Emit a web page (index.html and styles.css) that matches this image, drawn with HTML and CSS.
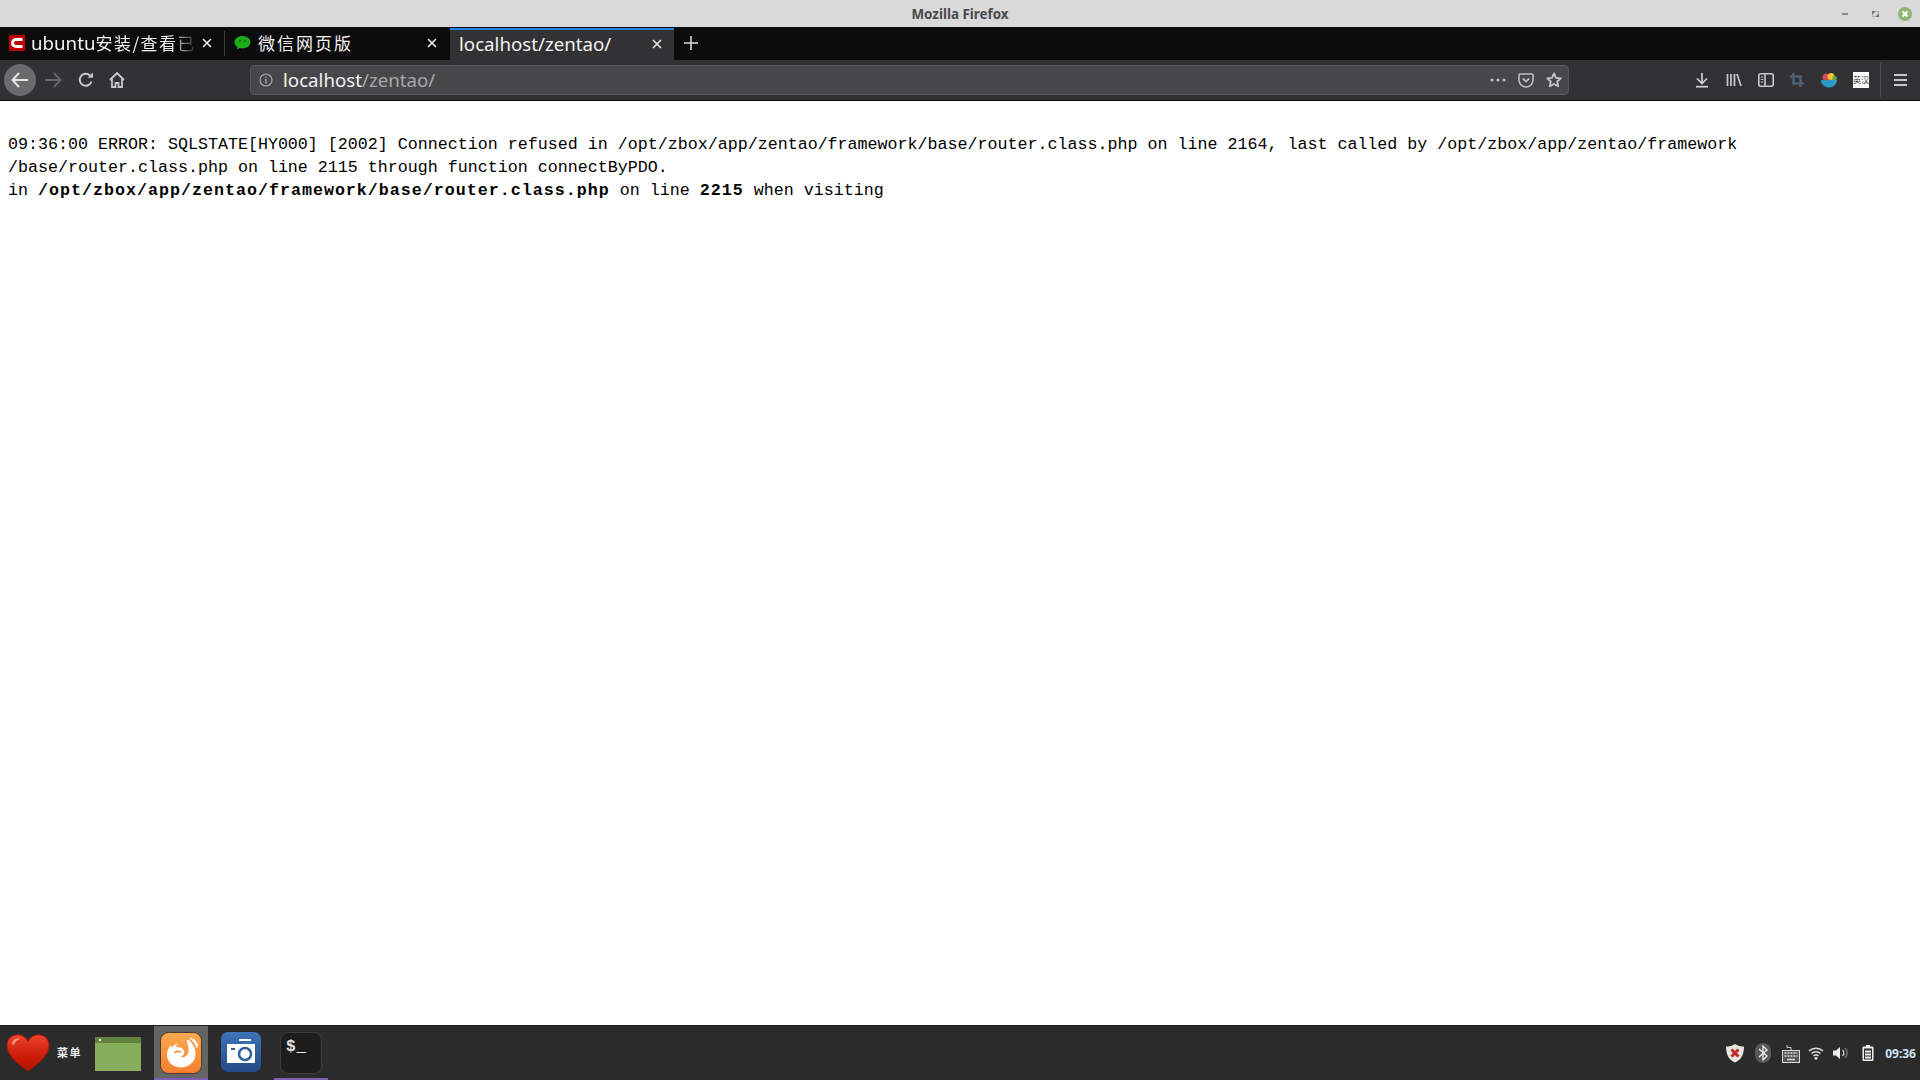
FILE: index.html
```html
<!DOCTYPE html>
<html lang="zh">
<head>
<meta charset="utf-8">
<title>Mozilla Firefox</title>
<link rel="stylesheet" href="styles.css">
</head>
<body>
<div class="window">
  <header class="titlebar">
    <div></div>
    <div class="title">Mozilla Firefox</div>
    <div class="winctl">
      <svg class="wc" width="30" height="14" viewBox="0 0 30 14"><rect x="12" y="6" width="6" height="2" fill="#8a8a8a"/></svg>
      <svg class="wc" width="30" height="14" viewBox="0 0 30 14"><path d="M12 4h4l-4 4zM19 10h-4l4-4z" fill="#777"/><path d="M16 4h3v3zM15 10h-3V7z" fill="#aaa"/></svg>
      <svg class="wc" width="30" height="16" viewBox="0 0 30 16"><circle cx="15" cy="8" r="7" fill="#8fb573"/><path d="M12.500 5.500l5 5M17.500 5.500l-5 5" stroke="#fff" stroke-width="2"/></svg>
    </div>
  </header>

  <div class="tabbar">
    <div class="tab tab-first">
      <svg class="favicon" width="16" height="16" viewBox="0 0 16 16"><rect width="16" height="16" fill="#c00000"/><path d="M13.500 4.500H7a3.500 3.500 0 0 0 0 7h6.500" fill="none" stroke="#fff" stroke-width="3"/></svg>
      <span class="tab-label tab-fade">ubuntu<span class="cjk">安装/查看已</span></span>
      <svg class="tab-x" width="10" height="10" viewBox="0 0 10 10"><path d="M1 1l8 8M9 1l-8 8" stroke="#f0f0f0" stroke-width="1.600"/></svg>
    </div>
    <div class="tab tab-second">
      <svg class="favicon" width="17" height="16" viewBox="0 0 17 16"><path d="M8.500 1C4 1 .5 3.700.5 7.200c0 2 1.100 3.700 3 4.800l-.7 2.600 3-1.600c.9.200 1.700.3 2.700.3 4.500 0 8-2.800 8-6.100S13 1 8.500 1z" fill="#1aad19"/><circle cx="6" cy="5.800" r="1" fill="#0c5c0c"/><circle cx="11" cy="5.800" r="1" fill="#0c5c0c"/></svg>
      <span class="tab-label cjk wide">微信网页版</span>
      <svg class="tab-x" width="10" height="10" viewBox="0 0 10 10"><path d="M1 1l8 8M9 1l-8 8" stroke="#f0f0f0" stroke-width="1.600"/></svg>
    </div>
    <div class="tab tab-active">
      <span class="tab-label">localhost/zentao/</span>
      <svg class="tab-x" width="10" height="10" viewBox="0 0 10 10"><path d="M1 1l8 8M9 1l-8 8" stroke="#e8e8e8" stroke-width="1.600"/></svg>
    </div>
    <svg class="newtab" width="14" height="14" viewBox="0 0 14 14"><path d="M7 0v14M0 7h14" stroke="#d8d8d8" stroke-width="1.600"/></svg>
  </div>

  <nav class="navbar">
    <div class="backbtn">
      <svg width="18" height="16" viewBox="0 0 18 16"><path d="M8 1L1.500 8 8 15M2 8h15" fill="none" stroke="#e6e6e6" stroke-width="2"/></svg>
    </div>
    <svg class="navicon nav-fwd" width="18" height="16" viewBox="0 0 18 16"><path d="M10 1l6.500 7-6.500 7M16 8H1" fill="none" stroke="#66666a" stroke-width="2"/></svg>
    <svg class="navicon" width="16" height="16" viewBox="0 0 16 16"><path d="M13.500 9.500A6 6 0 1 1 12 3.500" fill="none" stroke="#c8c8ca" stroke-width="2"/><path d="M9.500 5.800h5.500V.5z" fill="#c8c8ca"/></svg>
    <svg class="navicon nav-home" width="16" height="16" viewBox="0 0 16 16"><path d="M1 8l7-7 7 7M3 7v8h3.500v-4h3v4H13V7" fill="none" stroke="#c8c8ca" stroke-width="1.800"/></svg>

    <div class="urlbar">
      <svg class="info" width="14" height="14" viewBox="0 0 14 14"><circle cx="7" cy="7" r="6" fill="none" stroke="#a8a8aa" stroke-width="1.200"/><path d="M7 6v4.500M7 3.500v1.300" stroke="#a8a8aa" stroke-width="1.400"/></svg>
      <span class="url"><span class="url-host">localhost</span>/zentao/</span>
      <svg class="url-ic" width="16" height="4" viewBox="0 0 16 4"><circle cx="2" cy="2" r="1.600" fill="#bdbdbf"/><circle cx="8" cy="2" r="1.600" fill="#bdbdbf"/><circle cx="14" cy="2" r="1.600" fill="#bdbdbf"/></svg>
      <svg class="url-ic" width="16" height="15" viewBox="0 0 16 15"><path d="M1 2.200q0-1.200 1.200-1.200h11.600q1.200 0 1.200 1.200V7a7 7 0 0 1-14 0z" fill="none" stroke="#bdbdbf" stroke-width="1.600"/><path d="M4.800 5.500L8 8.500l3.200-3" fill="none" stroke="#bdbdbf" stroke-width="1.800"/></svg>
      <svg class="url-ic" width="16" height="16" viewBox="0 0 16 16"><path d="M8 1.300l2 4.500 4.800.5-3.600 3.200 1 4.800L8 11.900l-4.200 2.400 1-4.800L1.200 6.300 6 5.800z" fill="none" stroke="#c8c8ca" stroke-width="1.700" stroke-linejoin="round"/></svg>
    </div>

    <div class="tools">
      <svg width="16" height="16" viewBox="0 0 16 16"><path d="M8 1v10M3 6.500L8 11.500l5-5" fill="none" stroke="#d0d0d2" stroke-width="1.700"/><path d="M2 14.700h12" stroke="#d0d0d2" stroke-width="1.700"/></svg>
      <svg width="16" height="16" viewBox="0 0 16 16"><path d="M1.500 2v12M5 2v12M8.500 2v12M11 2l4 12" stroke="#c8c8ca" stroke-width="1.700" fill="none"/></svg>
      <svg width="16" height="14" viewBox="0 0 16 14"><rect x=".8" y=".8" width="14.400" height="12.400" rx="2" fill="none" stroke="#c8c8ca" stroke-width="1.600"/><path d="M7 1v12" stroke="#c8c8ca" stroke-width="1.600"/><path d="M2.800 4h2.500M2.800 6.500h2.500M2.800 9h2.500" stroke="#c8c8ca" stroke-width="1"/></svg>
      <svg width="14" height="14" viewBox="0 0 14 14"><path d="M3.500 0v10.500H14M0 3.500h10.500V14" fill="none" stroke="#4c6072" stroke-width="2.600"/></svg>
      <svg class="t-bowl" width="16" height="16" viewBox="0 0 16 16"><path d="M0 8h16a8 7.500 0 0 1-16 0z" fill="#2b9bc9"/><circle cx="5" cy="5" r="3.500" fill="#d64a5a"/><circle cx="10" cy="4.500" r="3.500" fill="#f1c232"/><circle cx="13.500" cy="6" r="2.300" fill="#5fae4f"/></svg>
      <div class="dict">英汉</div>
      <div class="sep"></div>
      <svg class="menu" width="13" height="12" viewBox="0 0 13 12"><path d="M0 1h13M0 6h13M0 11h13" stroke="#c8c8ca" stroke-width="1.800"/></svg>
    </div>
  </nav>

  <main class="content">
    <p class="err">09:36:00 ERROR: SQLSTATE[HY000] [2002] Connection refused in /opt/zbox/app/zentao/framework/base/router.class.php on line 2164, last called by /opt/zbox/app/zentao/framework<br>/base/router.class.php on line 2115 through function connectByPDO.<br>in <strong>/opt/zbox/app/zentao/framework/base/router.class.php</strong> on line <strong>2215</strong> when visiting</p>
  </main>

  <footer class="panel">
    <svg class="heart" width="44" height="40" viewBox="0 0 46 40">
      <defs>
        <linearGradient id="hg" x1="0" y1="0" x2="0" y2="1"><stop offset="0" stop-color="#f0442c"/><stop offset=".6" stop-color="#c91b06"/><stop offset="1" stop-color="#b01405"/></linearGradient>
      </defs>
      <path d="M23 39C12 31 1 23 1 12 1 5 6 1 12 1c5 0 9 2.500 11 7 2-4.500 6-7 11-7 6 0 11 4 11 11 0 11-11 19-22 27z" fill="url(#hg)" stroke="#a01208"/>
      <path d="M6 10c1-4 5-6 9-5-3 1-6 3-7 7z" fill="#f89a80"/>
    </svg>
    <span class="menu-label">菜单</span>
    <svg class="files" width="46" height="34" viewBox="0 0 46 34"><rect width="46" height="34" fill="#88ad5a"/><rect width="46" height="6" fill="#63823f"/><rect x="4" y="2" width="2" height="2" fill="#e8f0d8"/></svg>
    <div class="task task-hover">
      <svg width="42" height="42" viewBox="0 0 42 42">
        <defs><linearGradient id="fg" x1="0" y1="0" x2="0" y2="1"><stop offset="0" stop-color="#fda94f"/><stop offset="1" stop-color="#f47f2e"/></linearGradient></defs>
        <rect x=".5" y=".5" width="41" height="41" rx="8" fill="url(#fg)" stroke="#4a3a30"/>
        <path d="M29 8c4 4 7 9 6.500 15-.7 7.500-7 12.500-14.500 12.500S7 30 7 23c0-4 1.500-7.500 4-10l.5 3c1.500-2.500 4-4 7-4.500-1.300 1-2.500 2-3 3.500 3-.5 7 .5 8.500 3.500 1.200 3-1 6-4 6.500 3.500 1.300 7.500-1 8.500-5 .8-4-1-8-2-11.500z" fill="#fff"/>
        <path d="M14 21c2-2 5-2 7-1" fill="none" stroke="#f58a35" stroke-width="1.500"/>
        <path d="M30 6c3 2 6 6 7 10M33 7c2 2 4 4 5 7" fill="none" stroke="#fff" stroke-width="1.300"/>
      </svg>
    </div>
    <div class="task">
      <svg width="40" height="40" viewBox="0 0 40 40">
        <defs><linearGradient id="cg" x1="0" y1="0" x2="0" y2="1"><stop offset="0" stop-color="#3d74b8"/><stop offset="1" stop-color="#244a85"/></linearGradient></defs>
        <rect width="40" height="40" rx="7" fill="url(#cg)"/>
        <rect x="18" y="7" width="12" height="2" fill="#fff"/>
        <rect x="6" y="12" width="28" height="19" fill="#fff"/>
        <circle cx="24" cy="22" r="6" fill="#fff" stroke="#2f5f9f" stroke-width="2.500"/>
        <rect x="10" y="16" width="4" height="2" fill="#2f5f9f"/>
      </svg>
    </div>
    <div class="task task-open">
      <div class="term">$_</div>
    </div>
    <div class="tray">
      <svg class="t-shield" width="20" height="20" viewBox="0 0 20 20"><path d="M10 1c3 2 6 2.500 9 2.500 0 7-2 13-9 16C3 16.500 1 10.500 1 3.500 4 3.500 7 3 10 1z" fill="#e8e6e0"/><path d="M6.500 6.500l7 7M13.500 6.500l-7 7" stroke="#c0282c" stroke-width="3"/></svg>
      <svg class="t-bt" width="16" height="20" viewBox="0 0 16 20"><rect width="16" height="20" rx="8" fill="#58585a"/><path d="M4 6l8 7-4 4V3l4 4-8 7" fill="none" stroke="#eee" stroke-width="1.300"/></svg>
      <svg class="t-kb" width="18" height="19" viewBox="0 0 18 19"><path d="M9 6V3.500H5V1" fill="none" stroke="#ccc"/><rect x=".5" y="6.500" width="17" height="12" fill="#555" stroke="#ddd"/><path d="M2.500 9h13M2.500 12h13" stroke="#ddd" stroke-width="1.500" stroke-dasharray="2 1"/><path d="M5 15.500h8" stroke="#ddd" stroke-width="1.500"/></svg>
      <svg class="t-wifi" width="16" height="14" viewBox="0 0 16 14"><path d="M1 5a10 10 0 0 1 14 0M3.500 7.500a6.500 6.500 0 0 1 9 0M5.500 10a3.500 3.500 0 0 1 5 0" fill="none" stroke="#ddd" stroke-width="1.500"/><path d="M8 11l-2 1 2 2 2-2z" fill="#eee"/></svg>
      <svg class="t-vol" width="16" height="14" viewBox="0 0 16 14"><path d="M0 4.500h3L7 1v12L3 9.500H0z" fill="#eee"/><path d="M9.500 4a4 4 0 0 1 0 6" fill="none" stroke="#ccc" stroke-width="1.400"/><path d="M12 2a7 7 0 0 1 0 10" fill="none" stroke="#777" stroke-width="1.400"/></svg>
      <svg class="t-bat" width="12" height="16" viewBox="0 0 12 16"><path d="M4 0h4v1.500h2.500q1 0 1 1V15q0 1-1 1h-9q-1 0-1-1V2.500q0-1 1-1H4z" fill="#eee"/><rect x="2" y="3.500" width="8" height="11" fill="#2b2b2b"/><path d="M3 5.500h6v2H3zM3 8.500h6v2H3zM3 11.500h6v2H3z" fill="#eee"/></svg>
      <span class="clock">09:36</span>
    </div>
  </footer>
</div>
</body>
</html>
```

FILE: styles.css
```css
html, body { margin: 0; height: 100%; background: #fff; overflow: hidden; }
.window { height: 100vh; display: flex; flex-direction: column; font-family: "Noto Sans", sans-serif; }

.titlebar { height: 27px; flex: none; background: #d9d9d9; display: grid; grid-template-columns: 1fr auto 1fr; align-items: center; }
.title { font-size: 13.400px; font-weight: 700; color: #4a4a4a; }
.winctl { display: flex; justify-content: flex-end; align-items: center; }
.wc { display: block; }

.tabbar { height: 33px; flex: none; background: #0c0c0c; display: flex; align-items: stretch; box-sizing: border-box; }
.tab { display: flex; align-items: center; color: #f2f2f2; font-size: 18.700px; box-sizing: border-box; position: relative; padding-bottom: 2px; }
.tab-first { width: 224px; padding-left: 9px; padding-right: 12px; }
.tab-second { width: 226px; padding-left: 9px; padding-right: 13px; border-left: 1px solid #3c3c3e; margin: 4px 0; }
.tab-active { width: 224px; padding-left: 9px; padding-right: 12px; padding-bottom: 3px; background: #323234; border-top: 2px solid #2a84e8; margin-top: 1px; }
.tab-label { flex: 1; white-space: nowrap; overflow: hidden; min-width: 0; }
.tab-first .tab-label { margin-left: 6px; margin-right: 4px; }
.tab-second .tab-label { margin-left: 7px; }
.tab-fade { -webkit-mask-image: linear-gradient(to right, #000 84%, transparent 100%); mask-image: linear-gradient(to right, #000 84%, transparent 100%); }
.cjk { font-family: "Noto Sans CJK SC", sans-serif; font-size: 17px; letter-spacing: 1.500px; }
.wide { letter-spacing: 2px; }
.tab-x { flex: none; }
.tab-first .tab-x, .tab-second .tab-x, .tab-active .tab-x { margin-top: 1px; }
.newtab { align-self: center; margin-left: 10px; margin-bottom: 2px; }

.navbar { height: 41px; flex: none; box-sizing: border-box; background: #323234; border-bottom: 1px solid #0c0c0c; display: flex; align-items: center; padding-left: 4px; }
.backbtn { width: 32px; height: 32px; border-radius: 50%; background: #6a6a6c; display: flex; align-items: center; justify-content: center; flex: none; }
.navicon { flex: none; margin-left: 16px; }
.nav-fwd { margin-left: 8px; }
.nav-home { margin-left: 15px; }
.urlbar { flex: none; width: 1319px; height: 30px; margin-left: 125px; box-sizing: border-box; background: #474749; border: 1px solid #58585a; border-radius: 4px; display: flex; align-items: center; padding: 0 6px 2px 8px; color: #a8a8aa; font-size: 18.700px; }
.url { flex: 1; margin-left: 10px; }
.url-host { color: #f2f2f2; }
.url-ic { flex: none; margin-left: 12px; margin-top: 2px; }
.info { margin-top: 2px; }
.tools { flex: 1; display: flex; align-items: center; gap: 16px; padding-left: 125px; }
.tools svg { flex: none; display: block; }
.tools .t-bowl { margin-left: 1px; margin-right: -1px; }
.dict { width: 16px; height: 16px; background: #fff; color: #333; font: 8px/16px "Noto Sans CJK SC", sans-serif; text-align: center; white-space: nowrap; overflow: hidden; margin-left: 1px; }
.sep { width: 1px; height: 34px; background: #4c4c4e; margin-left: -5px; }
.tools .menu { margin-left: -3px; }

.content { flex: 1; min-height: 0; background: #fff; padding: 32px 8px 0; }
.err { margin: 0; font-family: "Liberation Mono", monospace; font-size: 16.667px; line-height: 23px; color: #000; white-space: nowrap; }
.err strong { letter-spacing: 1px; }

.panel { height: 55px; flex: none; background: #2b2b2b; display: flex; align-items: flex-start; box-sizing: border-box; border-top: 1px solid #1c1c1c; }
.heart { flex: none; margin: 7px 0 0 6px; }
.menu-label { flex: none; width: 26px; margin: 19px 0 0 7px; font: 700 11px/14px "Noto Sans CJK SC", sans-serif; color: #e8eef2; letter-spacing: 1.500px; white-space: nowrap; }
.files { flex: none; margin: 11px 0 0 12px; display: block; }
.task { flex: none; width: 54px; height: 54px; box-sizing: border-box; display: flex; align-items: flex-start; justify-content: center; padding-top: 6px; margin-left: 6px; }
.task svg { display: block; }
.task-hover { background: #646464; border-bottom: 2px solid #7c5fb5; margin-left: 13px; }
.task-open { border-bottom: 2px solid #7c5fb5; }
.term { width: 42px; height: 42px; box-sizing: border-box; background: #1d1d1d; border: 1px solid #3c3c3c; border-radius: 8px; color: #e4e4e4; font: 700 16px/20px "Liberation Mono", monospace; letter-spacing: 1px; padding: 4px 0 0 5px; }
.tray { margin-left: auto; height: 54px; display: flex; align-items: center; padding-right: 4px; }
.tray svg { flex: none; display: block; }
.t-bt { margin-left: 10px; }
.t-kb { margin-left: 11px; }
.t-wifi { margin-left: 8px; }
.t-vol { margin-left: 9px; }
.t-bat { margin-left: 13px; }
.clock { font-size: 12px; font-weight: 700; color: #cfe2f3; margin-left: 11px; }
```
